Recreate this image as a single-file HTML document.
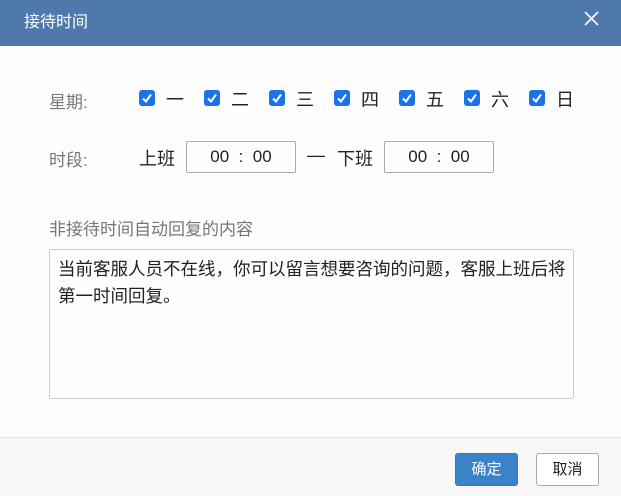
<!DOCTYPE html>
<html><head><meta charset="utf-8"><style>
*{margin:0;padding:0;box-sizing:border-box}
body{width:621px;height:496px;overflow:hidden;background:#fdfdfd;font-family:"Liberation Sans","Noto Sans CJK SC",sans-serif;position:relative;color:#222}
.hd{position:absolute;left:0;top:0;width:621px;height:46px;background:#4f79ab;color:#fff;font-size:16px;line-height:46px;padding-left:24px}
.x{position:absolute;left:584px;top:11px;width:15px;height:15px}
.a{position:absolute;white-space:nowrap}
.lbl{color:#777;font-size:17px}
.cb{position:absolute;top:90px;width:16px;height:16px;background:#1a73e8;border-radius:3px}
.cb svg{position:absolute;left:2px;top:2px}
.d{position:absolute;top:86px;font-size:18px;color:#222}
.box{position:absolute;top:141px;height:32px;width:110px;border:1px solid #aaa;border-radius:2px;text-align:center;line-height:30px;font-size:17px;white-space:pre}
.ta{position:absolute;left:49px;top:249px;width:525px;height:150px;border:1px solid #ccc;border-radius:2px;padding:6px 0 6px 8px;font-size:17.5px;line-height:27px;color:#222}
.ft{position:absolute;left:0;top:437px;width:621px;height:59px;background:#f7f7f7;border-top:1px solid #e3e3e3}
.btn{position:absolute;top:453px;width:63px;height:33px;border-radius:3px;font-size:15px;text-align:center;line-height:31px}
</style></head><body>
<div class="hd">接待时间</div>
<svg class="x" viewBox="0 0 15 15"><path d="M1 1L14 14M14 1L1 14" stroke="#fff" stroke-width="1.6"/></svg>
<div class="a lbl" style="left:49px;top:88px">星期:</div>
<div class="cb" style="left:139px"><svg width="12" height="12" viewBox="0 0 12 12"><path d="M2 6.5L5 9.5L10 2.5" stroke="#fff" stroke-width="2" fill="none"/></svg></div>
<div class="cb" style="left:204px"><svg width="12" height="12" viewBox="0 0 12 12"><path d="M2 6.5L5 9.5L10 2.5" stroke="#fff" stroke-width="2" fill="none"/></svg></div>
<div class="cb" style="left:269px"><svg width="12" height="12" viewBox="0 0 12 12"><path d="M2 6.5L5 9.5L10 2.5" stroke="#fff" stroke-width="2" fill="none"/></svg></div>
<div class="cb" style="left:334px"><svg width="12" height="12" viewBox="0 0 12 12"><path d="M2 6.5L5 9.5L10 2.5" stroke="#fff" stroke-width="2" fill="none"/></svg></div>
<div class="cb" style="left:399px"><svg width="12" height="12" viewBox="0 0 12 12"><path d="M2 6.5L5 9.5L10 2.5" stroke="#fff" stroke-width="2" fill="none"/></svg></div>
<div class="cb" style="left:464px"><svg width="12" height="12" viewBox="0 0 12 12"><path d="M2 6.5L5 9.5L10 2.5" stroke="#fff" stroke-width="2" fill="none"/></svg></div>
<div class="cb" style="left:529px"><svg width="12" height="12" viewBox="0 0 12 12"><path d="M2 6.5L5 9.5L10 2.5" stroke="#fff" stroke-width="2" fill="none"/></svg></div>
<div class="d" style="left:166px">一</div>
<div class="d" style="left:231px">二</div>
<div class="d" style="left:296px">三</div>
<div class="d" style="left:361px">四</div>
<div class="d" style="left:426px">五</div>
<div class="d" style="left:491px">六</div>
<div class="d" style="left:556px">日</div>
<div class="a lbl" style="left:49px;top:146px">时段:</div>
<div class="a" style="left:139px;top:145px;font-size:18px">上班</div>
<div class="box" style="left:186px">00  :  00</div>
<div class="a" style="left:307px;top:145px;font-size:18px">—</div>
<div class="a" style="left:337px;top:145px;font-size:18px">下班</div>
<div class="box" style="left:384px">00  :  00</div>
<div class="a lbl" style="left:49px;top:215px">非接待时间自动回复的内容</div>
<div class="ta">当前客服人员不在线，你可以留言想要咨询的问题，客服上班后将第一时间回复。</div>
<div class="ft"></div>
<div class="btn" style="left:455px;background:#3a83c8;color:#fff;border:1px solid #3579ba">确定</div>
<div class="btn" style="left:536px;background:#fff;color:#222;border:1px solid #aaa">取消</div>
</body></html>
